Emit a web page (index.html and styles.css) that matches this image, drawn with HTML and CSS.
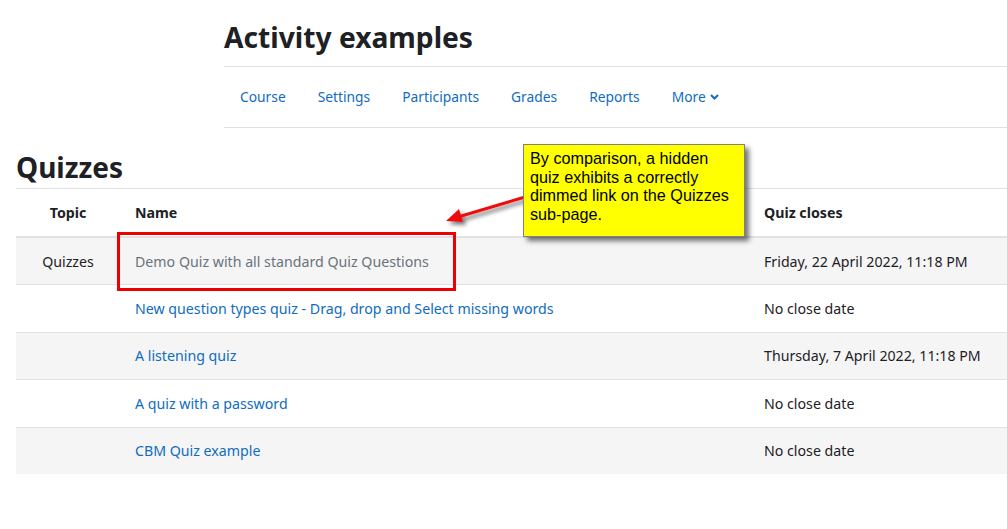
FILE: index.html
```html
<!DOCTYPE html>
<html lang="en">
<head>
<meta charset="utf-8">
<title>Activity examples - Quizzes</title>
<link rel="stylesheet" href="styles.css">
</head>
<body>
<div class="page">
  <header class="course-header">
    <h1 class="course-title">Activity examples</h1>
    <nav class="secondary-nav">
      <a class="nav-link" href="#">Course</a>
      <a class="nav-link" href="#">Settings</a>
      <a class="nav-link" href="#">Participants</a>
      <a class="nav-link" href="#">Grades</a>
      <a class="nav-link" href="#">Reports</a>
      <a class="nav-link more" href="#">More
        <svg class="chev" width="9" height="6" viewBox="0 0 9 6"><path d="M1 1 L4.5 4.5 L8 1" fill="none" stroke="currentColor" stroke-width="2"/></svg>
      </a>
    </nav>
  </header>

  <main class="content">
    <h2 class="section-title">Quizzes</h2>
    <table class="quiz-table">
      <colgroup>
        <col class="c-topic">
        <col class="c-name">
        <col class="c-close">
      </colgroup>
      <thead>
        <tr>
          <th class="topic">Topic</th>
          <th>Name</th>
          <th>Quiz closes</th>
        </tr>
      </thead>
      <tbody>
        <tr class="odd">
          <td class="topic">Quizzes</td>
          <td><a class="dimmed" href="#">Demo Quiz with all standard Quiz Questions</a></td>
          <td>Friday, 22 April 2022, 11:18 PM</td>
        </tr>
        <tr>
          <td class="topic"></td>
          <td><a href="#">New question types quiz - Drag, drop and Select missing words</a></td>
          <td>No close date</td>
        </tr>
        <tr class="odd">
          <td class="topic"></td>
          <td><a href="#">A listening quiz</a></td>
          <td>Thursday, 7 April 2022, 11:18 PM</td>
        </tr>
        <tr>
          <td class="topic"></td>
          <td><a href="#">A quiz with a password</a></td>
          <td>No close date</td>
        </tr>
        <tr class="odd">
          <td class="topic"></td>
          <td><a href="#">CBM Quiz example</a></td>
          <td>No close date</td>
        </tr>
      </tbody>
    </table>
  </main>

  <svg class="annot-svg" width="1007" height="529" viewBox="0 0 1007 529">
    <defs>
      <filter id="sh" x="-20%" y="-20%" width="160%" height="160%">
        <feGaussianBlur in="SourceAlpha" stdDeviation="2"/>
        <feOffset dx="3" dy="3"/>
        <feComponentTransfer><feFuncA type="linear" slope="0.55"/></feComponentTransfer>
        <feMerge><feMergeNode/><feMergeNode in="SourceGraphic"/></feMerge>
      </filter>
    </defs>
    <rect x="118.5" y="233.5" width="336" height="56" fill="none" stroke="#ee0000" stroke-width="3"/>
    <g filter="url(#sh)">
      <line x1="525" y1="197" x2="458" y2="217" stroke="#ee1111" stroke-width="3"/>
      <polygon points="446,221 459,209 463,222" fill="#ee1111"/>
    </g>
  </svg>

  <div class="callout">By comparison, a hidden quiz exhibits a correctly dimmed link on the Quizzes sub-page.</div>
</div>
</body>
</html>
```

FILE: styles.css
```css
html, body {
  margin: 0;
  padding: 0;
  background: #ffffff;
}

body {
  font-family: "Noto Sans", "Open Sans", sans-serif;
  color: #1d2125;
  font-size: 14.2px;
}

.page {
  position: relative;
  width: 1007px;
  height: 529px;
  overflow: hidden;
}

.course-header {
  margin-left: 224px;
  padding-top: 17px;
}

.course-title {
  margin: 0;
  font-size: 28.2px;
  font-weight: 700;
  line-height: 40px;
  height: 49px;
}

.secondary-nav {
  display: flex;
  align-items: center;
  height: 60px;
  border-top: 1px solid #dee2e6;
  border-bottom: 1px solid #dee2e6;
}

.nav-link {
  color: #0f6cbf;
  text-decoration: none;
  padding: 0 16px;
  display: flex;
  align-items: center;
  gap: 4px;
  font-size: 13.8px;
  margin-top: -2px;
}

.chev {
  margin-top: 1px;
}

.content {
  padding-left: 16px;
}

.section-title {
  margin: 0;
  padding-top: 18px;
  font-size: 28px;
  font-weight: 700;
  line-height: 42px;
  height: 42px;
}

.quiz-table {
  width: 991px;
  border-collapse: collapse;
  table-layout: fixed;
}

.c-topic { width: 104px; }
.c-name { width: 629px; }

.quiz-table th,
.quiz-table td {
  text-align: left;
  padding: 0 15px;
  font-size: 14.2px;
  vertical-align: middle;
  white-space: nowrap;
}

.quiz-table th {
  height: 47px;
  font-weight: 700;
  border-top: 1px solid #dee2e6;
  border-bottom: 2px solid #dee2e6;
}

.quiz-table td {
  height: 46.4px;
  border-bottom: 1px solid #dee2e6;
}

.quiz-table tbody tr:last-child td {
  border-bottom: none;
  height: 46px;
}

.quiz-table .topic {
  text-align: center;
}

.quiz-table tr.odd td {
  background: #f5f5f5;
}

.quiz-table a {
  color: #0f6cbf;
  text-decoration: none;
}

.quiz-table a.dimmed {
  color: #6a737b;
}

.annot-svg {
  position: absolute;
  left: 0;
  top: 0;
  pointer-events: none;
}

.callout {
  position: absolute;
  left: 523px;
  top: 144px;
  width: 207px;
  height: 84px;
  padding: 4px 7px 3px 6px;
  background: #ffff00;
  border: 1px solid #808080;
  box-shadow: 4px 4px 5px rgba(0, 0, 0, 0.55);
  font-family: "Liberation Sans", Arial, sans-serif;
  font-size: 16.2px;
  line-height: 18.6px;
  color: #000;
}
```
